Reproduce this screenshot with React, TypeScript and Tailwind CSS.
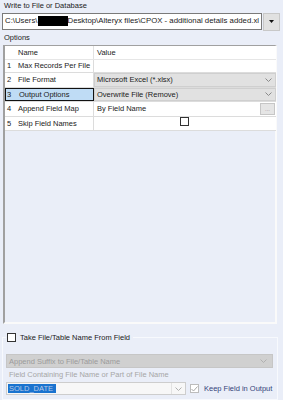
import React from "react";

const Chevron = ({ color = "#7a7a7a" }: { color?: string }) => (
  <svg width="7" height="4" viewBox="0 0 7 4" className="shrink-0">
    <path d="M0.5 0.5 L3.5 3.5 L6.5 0.5" fill="none" stroke={color} strokeWidth="1" />
  </svg>
);

const Checkbox = ({ checked = false, disabled = false }: { checked?: boolean; disabled?: boolean }) => (
  <div
    className={`w-[9px] h-[9px] border ${disabled ? "border-[#bcbcbc]" : "border-[#333333]"} bg-white flex items-center justify-center shrink-0`}
  >
    {checked && (
      <svg width="7" height="6" viewBox="0 0 7 6">
        <path d="M0.5 3 L2.5 5 L6.5 0.5" fill="none" stroke="#a8a8a8" strokeWidth="1" />
      </svg>
    )}
  </div>
);

export default function App() {
  const rows = [
    { n: "1", name: "Max Records Per File", h: "h-[13px]", kind: "text", value: "" },
    { n: "2", name: "File Format", h: "h-[15px]", kind: "combo", value: "Microsoft Excel (*.xlsx)" },
    { n: "3", name: "Output Options", h: "h-[14px]", kind: "combo", value: "Overwrite File (Remove)", selected: true },
    { n: "4", name: "Append Field Map", h: "h-[15px]", kind: "dots", value: "By Field Name" },
    { n: "5", name: "Skip Field Names", h: "h-[14px]", kind: "check", value: "" },
  ];

  return (
    <div
      className="w-[283px] h-[400px] bg-[#eaeef8] text-[7.5px] text-[#1b1b1b] overflow-hidden flex flex-col"
      style={{ fontFamily: '"Liberation Sans", Arial, sans-serif' }}
    >
      {/* Title */}
      <div className="h-[13px] leading-[12px] pl-[4px]">Write to File or Database</div>

      {/* Path input */}
      <div className="flex h-[18px]">
        <div className="ml-[2px] w-[260px] h-[17px] border border-[#7a7a7a] bg-white flex items-center pl-[2px] overflow-hidden whitespace-nowrap text-[7.8px]">
          <span>{"C:\\Users\\"}</span>
          <span className="inline-block w-[30px] h-[10px] bg-black" />
          <span>{"Desktop\\Alteryx files\\CPOX - additional details added.xl"}</span>
        </div>
        <div className="ml-[1px] w-[17px] h-[18px] bg-[#e1e1e1] border border-[#c8c8c8] flex items-center justify-center">
          <svg width="5" height="3" viewBox="0 0 5 3">
            <path d="M0 0 L5 0 L2.5 3 Z" fill="#111111" />
          </svg>
        </div>
      </div>

      {/* Options label */}
      <div className="h-[14px] leading-[14px] pl-[4px]">Options</div>

      {/* Options grid panel */}
      <div className="ml-[3px] w-[274px] h-[284px] border-t border-t-[#a0a0a0] border-l-2 border-l-[#a0a0a0] border-r-2 border-r-[#fafafa] border-b-2 border-b-[#fafafa] bg-[#eaeef8] flex flex-col">
        <div className="w-[271px] bg-white flex flex-col">
          {/* header */}
          <div className="h-[14px] flex items-center border-b border-[#e6e6e6]">
            <div className="w-[89px] pl-[13px] h-full flex items-center border-r border-[#e2e2e2]">Name</div>
            <div className="pl-[3px]">Value</div>
          </div>
          {rows.map((r) => (
            <div key={r.n} className={`${r.h} flex border-b border-[#dcdcdc]`}>
              <div
                className={`w-[89px] h-full flex items-center shrink-0 ${
                  r.selected ? "bg-[#bfdcf5] border border-[#111111]" : "border-r border-[#dcdcdc]"
                }`}
              >
                <span className={`w-[13px] ${r.selected ? "pl-[1px]" : "pl-[2px]"}`}>{r.n}</span>
                <span>{r.name}</span>
              </div>
              {r.kind === "combo" && (
                <div className="flex-1 h-full bg-[#e1e1e1] border border-[#cfcfcf] flex items-center justify-between pl-[2px] pr-[3px]">
                  <span>{r.value}</span>
                  <Chevron color="#8a8a8a" />
                </div>
              )}
              {r.kind === "text" && <div className="flex-1 h-full" />}
              {r.kind === "dots" && (
                <div className="flex-1 h-full flex items-center justify-between pl-[3px] pr-[1px]">
                  <span>{r.value}</span>
                  <div className="w-[15px] h-[12px] bg-[#e5e5e5] border border-[#c6c6c6] flex items-center justify-center text-[#9a8a9a] text-[6px] leading-none">
                    ...
                  </div>
                </div>
              )}
              {r.kind === "check" && (
                <div className="flex-1 h-full flex items-start justify-center pt-[0px] pr-[1px]">
                  <Checkbox />
                </div>
              )}
            </div>
          ))}
        </div>
      </div>

      {/* Group box */}
      <fieldset className="mt-[7px] ml-[2px] w-[276px] border border-[#f7f9fd] h-[70px]">
        <legend className="ml-[3px] px-[1px] h-[12px] flex items-center gap-[4px]">
          <Checkbox />
          <span className="pr-[2px]">Take File/Table Name From Field</span>
        </legend>
        <div className="mt-[11px] ml-[3px] w-[267px] h-[14px] bg-[#d0d0d0] border border-[#c6c6c6] flex items-center justify-between pl-[2px] pr-[5px] text-[#9b9b9b]">
          <span>Append Suffix to File/Table Name</span>
          <Chevron color="#b0b0b0" />
        </div>
        <div className="h-[13px] leading-[13px] pl-[6px] text-[#a6a6a6]">
          Field Containing File Name or Part of File Name
        </div>
        <div className="mt-[1px] flex items-center">
          <div className="ml-[3px] w-[180px] h-[13px] bg-[#f7f7f7] border border-[#cdcdcd] flex items-center">
            <div className="flex-1 h-full flex items-center pl-[1px]">
              <span className="bg-[#1a73cf] text-[#b8c8e6] h-[9px] leading-[9px] w-[48px] pl-[1px]">SOLD_DATE</span>
            </div>
            <div className="w-[14px] h-full border-l border-[#e2e2e2] flex items-center justify-center">
              <Chevron color="#b0b0b0" />
            </div>
          </div>
          <div className="ml-[4px] flex items-center gap-[5px]">
            <Checkbox checked disabled />
            <span className="text-[#34437a]">Keep Field in Output</span>
          </div>
        </div>
      </fieldset>
    </div>
  );
}
